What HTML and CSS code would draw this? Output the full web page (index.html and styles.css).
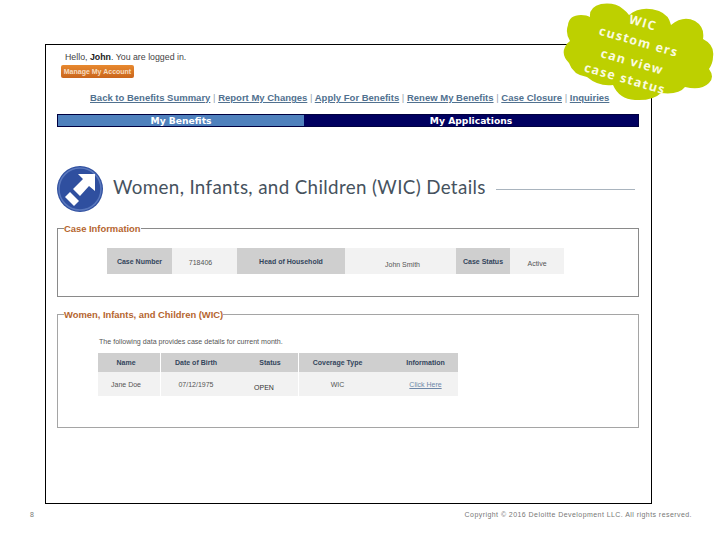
FILE: index.html
```html
<!DOCTYPE html>
<html lang="en">
<head>
    <meta charset="UTF-8">
    <title>WIC Details</title>
    <link rel="stylesheet" href="styles.css">
</head>
<body>
    <div class="slide">
        <div class="frame">
            <p class="hello">Hello, <b>John</b>. You are logged in.</p>
            <button class="account-btn">Manage My Account</button>

            <nav class="links">
                <a href="#">Back to Benefits Summary</a> <span>|</span>
                <a href="#">Report My Changes</a> <span>|</span>
                <a href="#">Apply For Benefits</a> <span>|</span>
                <a href="#">Renew My Benefits</a> <span>|</span>
                <a href="#">Case Closure</a> <span>|</span>
                <a href="#">Inquiries</a>
            </nav>

            <div class="tabs">
                <div class="tab active">My Benefits</div>
                <div class="tab">My Applications</div>
            </div>

            <div class="title-row">
                <svg class="title-icon" width="46" height="46" viewBox="0 0 46 46">
                    <circle cx="23" cy="23" r="23" fill="#2f4f9f"/>
                    <circle cx="23" cy="23" r="21" fill="none" stroke="#5a78bd" stroke-width="1.5"/>
                    <path d="M21 8 H38 V25 L32 20 L23 30 L16 23 L26 13 Z" fill="#fff"/>
                    <path d="M8 31 L13 26 L22 35 L17 40 Z" fill="#fff"/>
                </svg>
                <h1>Women, Infants, and Children (WIC) Details</h1>
                <div class="title-rule"></div>
            </div>

            <fieldset class="box box-case">
                <legend>Case Information</legend>
                <div class="case-row">
                    <div class="cell head c1">Case Number</div>
                    <div class="cell c2">718406</div>
                    <div class="cell head c3">Head of Household</div>
                    <div class="cell c4 low">John Smith</div>
                    <div class="cell head c5">Case Status</div>
                    <div class="cell c6">Active</div>
                </div>
            </fieldset>

            <fieldset class="box box-wic">
                <legend>Women, Infants, and Children (WIC)</legend>
                <p class="note">The following data provides case details for current month.</p>
                <div class="wic-table">
                    <div class="cell head col-name">Name</div>
                    <div class="cell head col-dob">Date of Birth</div>
                    <div class="cell head col-status">Status</div>
                    <div class="cell head col-type">Coverage Type</div>
                    <div class="cell head col-info">Information</div>
                    <div class="cell col-name">Jane Doe</div>
                    <div class="cell col-dob">07/12/1975</div>
                    <div class="cell low dark col-open">OPEN</div>
                    <div class="cell col-type">WIC</div>
                    <div class="cell col-info"><a href="#">Click Here</a></div>
                </div>
            </fieldset>
        </div>

        <div class="footer">
            <span class="page-no">8</span>
            <span class="copyright">Copyright © 2016 Deloitte Development LLC. All rights reserved.</span>
        </div>

        <div class="cloud">
            <svg width="152" height="98" viewBox="0 0 152 98">
                <path d="M5 22 Q6 12 18 12 Q24 12 27 14 Q26 4 38 1 Q52 -1 60 6 Q64 9 66 12 Q78 2 96 8 Q106 12 108 22 Q120 12 132 18 Q142 24 140 36 Q152 42 150 54 Q150 60 146 66 Q152 74 146 80 Q138 88 122 84 Q116 92 98 90 Q90 98 72 97 Q56 96 50 82 Q36 84 24 74 Q10 72 6 60 Q-2 52 2 44 Q4 40 7 38 Q2 30 5 22 Z" fill="#bdd000"/>
            </svg>
            <span class="cloud-line l1">WIC</span>
            <span class="cloud-line l2">custom ers</span>
            <span class="cloud-line l3">can view</span>
            <span class="cloud-line l4">case status</span>
        </div>
    </div>
</body>
</html>
```

FILE: styles.css
```css
html, body {
    margin: 0;
    background-color: #fff;
}
.slide {
    position: relative;
    width: 720px;
    height: 540px;
    padding: 44px 0 0 45px;
    box-sizing: border-box;
    font-family: "Liberation Sans", Arial, sans-serif;
    overflow: hidden;
}
.frame {
    width: 607px;
    height: 460px;
    border: 1px solid #000;
    box-sizing: border-box;
    padding: 7px 12px 0 11px;
}
.hello {
    margin: 0 0 0 8px;
    font-size: 8.8px;
    line-height: 11px;
    color: #444;
}
.hello b {
    color: #222;
}
.account-btn {
    display: block;
    width: 73px;
    height: 13px;
    margin: 2px 0 0 4px;
    padding: 0;
    border: none;
    border-radius: 2px;
    background: linear-gradient(#e8892f, #c9651c);
    color: #f6dcc0;
    font-family: "Liberation Sans", Arial, sans-serif;
    font-size: 7px;
    font-weight: bold;
}
.links {
    margin: 13px 0 0 33px;
    font-size: 9.5px;
    font-weight: bold;
    line-height: 13px;
    white-space: nowrap;
    color: #9aa5b0;
}
.links a {
    color: #51718f;
}
.links span {
    font-weight: normal;
}
.tabs {
    display: flex;
    height: 13px;
    margin: 10px 0 0 0;
    width: 582px;
    background-color: #000060;
    border: 1px solid #000040;
    box-sizing: border-box;
}
.tab {
    flex: 1;
    text-align: center;
    color: #fff;
    font-family: "DejaVu Sans", sans-serif;
    font-size: 9.2px;
    font-weight: bold;
    line-height: 11px;
}
.tab.active {
    flex: none;
    width: 246px;
    background-color: #4f81bd;
}
.title-row {
    display: flex;
    align-items: center;
    width: 582px;
    height: 46px;
    margin-top: 39px;
}
.title-icon {
    margin-right: 10px;
}
h1 {
    margin: 0 0 6px 0;
    font-family: "Lato", sans-serif;
    font-size: 18.8px;
    font-weight: normal;
    letter-spacing: 0.35px;
    color: #46525e;
    white-space: nowrap;
}
.title-rule {
    flex: 1;
    height: 1px;
    margin: 1px 4px 0 10px;
    background-color: #a9b4be;
}
.box {
    width: 582px;
    margin: 0;
    padding: 0;
    border: 1.5px solid #8a8a8a;
    box-sizing: border-box;
}
.box legend {
    margin-left: 6px;
    padding: 0;
    font-size: 9.4px;
    font-weight: bold;
    line-height: 11px;
    color: #b5652f;
}
.box-case {
    height: 74px;
    margin-top: 11px;
}
.box-wic {
    height: 119px;
    margin-top: 12px;
    border-color: #a5a5a5;
}
.cell {
    display: flex;
    align-items: center;
    justify-content: center;
    box-sizing: border-box;
    background-color: #f2f2f2;
    font-size: 7px;
    color: #555;
}
.cell.head {
    background-color: #cfcfcf;
    color: #33455c;
    font-weight: bold;
}
.cell.low {
    padding-top: 7px;
}
.cell.dark {
    color: #333;
}
.cell a {
    color: #6d87a8;
}
.case-row {
    display: flex;
    height: 26px;
    margin: 14px 0 0 49px;
}
.c1 { width: 65px; }
.c2 { width: 65px; padding: 2px 8px 0 0; }
.c3 { width: 108px; }
.c4 { width: 111px; padding-left: 4px; }
.c5 { width: 54px; }
.c6 { width: 54px; padding-top: 4px; }
.note {
    margin: 17px 0 0 41px;
    font-size: 7.1px;
    line-height: 10px;
    color: #555;
}
.wic-table {
    display: grid;
    grid-template-columns: 62px 77px 60px 100px 59px;
    grid-template-rows: 19px 24px;
    column-gap: 0.5px;
    width: 359px;
    margin: 6px 0 0 40px;
}
.col-name { padding-right: 6px; }
.col-dob { padding-right: 6px; }
.col-status { padding-left: 4px; }
.cell.col-open { padding-right: 8px; }
.col-type { padding-right: 22px; }
.col-info { padding-right: 6px; }
.footer {
    display: flex;
    justify-content: space-between;
    margin: 6px 28px 0 -15px;
    font-size: 7px;
    line-height: 10px;
    color: #777;
}
.copyright {
    letter-spacing: 0.44px;
}
.cloud {
    position: absolute;
    left: 563px;
    top: 3px;
    width: 152px;
    height: 98px;
    font-family: "Open Sans", sans-serif;
    font-size: 12.5px;
    font-weight: 700;
    color: #fbfbe0;
}
.cloud svg {
    display: block;
}
.cloud-line {
    position: absolute;
    white-space: nowrap;
    letter-spacing: 1.3px;
    transform: rotate(16deg);
}
.l1 { left: 66px; top: 11px; }
.l2 { left: 35px; top: 30px; }
.l3 { left: 37px; top: 50px; }
.l4 { left: 20px; top: 67px; }
```
